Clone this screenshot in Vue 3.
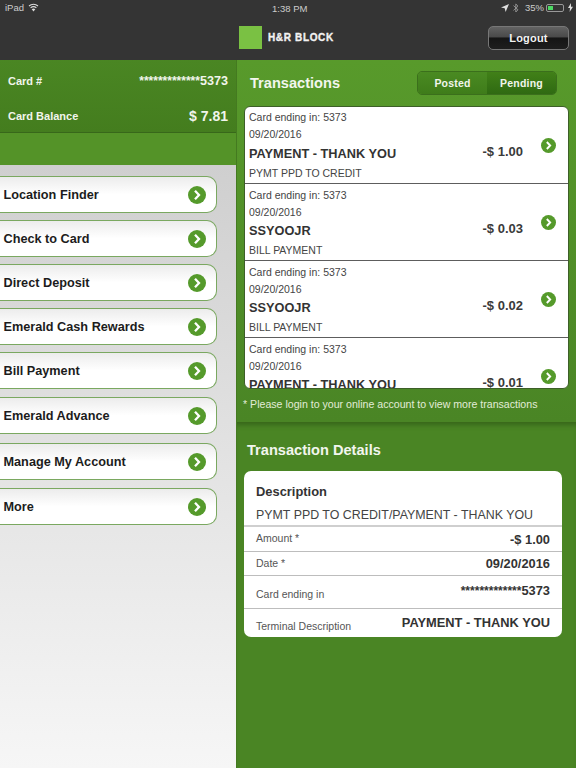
<script setup>
const menu = ['Location Finder','Check to Card','Direct Deposit','Emerald Cash Rewards','Bill Payment','Emerald Advance','Manage My Account','More']
const txs = [
  { title:'PAYMENT - THANK YOU', sub:'PYMT PPD TO CREDIT', amt:'-$ 1.00' },
  { title:'SSYOOJR', sub:'BILL PAYMENT', amt:'-$ 0.03' },
  { title:'SSYOOJR', sub:'BILL PAYMENT', amt:'-$ 0.02' },
  { title:'PAYMENT - THANK YOU', sub:'', amt:'-$ 0.01' },
]
</script>

<template>
  <div class="page">
    <header class="top">
      <div class="status">
        <div class="st-left">
          <span>iPad</span>
          <svg width="11" height="9" viewBox="0 0 11 9"><path d="M5.500 8.500 3.700 6.200a2.800 2.800 0 0 1 3.600 0Z" fill="#ddd"/><path d="M2.600 4.900a4.400 4.400 0 0 1 5.800 0M1 3a6.800 6.800 0 0 1 9 0" fill="none" stroke="#ddd" stroke-width="1.100"/></svg>
        </div>
        <span class="st-time">1:38 PM</span>
        <div class="st-right">
          <svg width="8" height="8" viewBox="0 0 8 8"><path d="M8 0 4.600 8 3.700 4.300 0 3.400Z" fill="#ddd"/></svg>
          <svg class="bt" width="6" height="10" viewBox="0 0 6 10"><path d="M.5 2.600 5 6.800 2.800 9V1L5 3.200.5 7.400" fill="none" stroke="#999" stroke-width=".9"/></svg>
          <span class="pct">35%</span>
          <div class="batt"><i></i></div>
          <svg width="5" height="9" viewBox="0 0 5 9"><path d="M3 0 0 5h2L1.600 9 5 3.700H3Z" fill="#ddd"/></svg>
        </div>
      </div>
      <div class="nav">
        <div class="logo"><i></i><span>H&amp;R BLOCK</span></div>
        <button class="logout">Logout</button>
      </div>
    </header>

    <main class="body">
      <aside class="left">
        <section class="card">
          <div class="card-row"><span>Card #</span><b class="num"><small>*************</small>5373</b></div>
          <div class="card-row"><span>Card Balance</span><b class="bal">$ 7.81</b></div>
        </section>
        <div class="spacer"></div>
        <nav class="menu">
          <a v-for="m in menu" :key="m" class="item">
            <span>{{ m }}</span>
            <svg class="chev big" viewBox="0 0 18 18"><circle cx="9" cy="9" r="9" fill="#559a2b"/><path d="M7 4.800 11 9l-4 4.200" fill="none" stroke="#fff" stroke-width="2.300"/></svg>
          </a>
        </nav>
      </aside>

      <div class="right">
        <section class="tx">
          <div class="tx-head">
            <h2>Transactions</h2>
            <div class="seg"><span class="on">Posted</span><span>Pending</span></div>
          </div>
          <div class="list">
            <div v-for="(t,i) in txs" :key="i" class="row">
              <div class="row-main">
                <p>Card ending in: 5373</p>
                <p>09/20/2016</p>
                <h3>{{ t.title }}</h3>
                <p class="sub">{{ t.sub }}</p>
              </div>
              <strong class="amt">{{ t.amt }}</strong>
              <svg class="chev" viewBox="0 0 18 18"><circle cx="9" cy="9" r="9" fill="#559a2b"/><path d="M7 4.800 11 9l-4 4.200" fill="none" stroke="#fff" stroke-width="2.300"/></svg>
            </div>
          </div>
          <p class="note">* Please login to your online account to view more transactions</p>
        </section>

        <section class="details">
          <h2>Transaction Details</h2>
          <div class="dcard">
            <div class="desc">
              <h4>Description</h4>
              <p>PYMT PPD TO CREDIT/PAYMENT - THANK YOU</p>
            </div>
            <div class="drow r1"><span>Amount *</span><b>-$ 1.00</b></div>
            <div class="drow r2"><span>Date *</span><b>09/20/2016</b></div>
            <div class="drow r3"><span>Card ending in</span><b class="mask"><small>*************</small>5373</b></div>
            <div class="drow r4"><span>Terminal Description</span><b>PAYMENT - THANK YOU</b></div>
          </div>
        </section>
      </div>
    </main>
  </div>
</template>

<style scoped>
.page { width:576px; height:768px; overflow:hidden; font-family:"Liberation Sans",Arial,sans-serif; display:flex; flex-direction:column; }
.top { height:60px; background:#343434; color:#ddd; flex:none; }
.status { height:20px; display:flex; align-items:center; justify-content:space-between; padding:0 3px 5px 5px; box-sizing:border-box; font-size:9.500px; position:relative; color:#ccc; }
.st-left,.st-right { display:flex; align-items:center; gap:4px; }
.bt { margin-right:2px; }
.pct { margin-right:-2px; }
.st-time { position:absolute; left:272px; top:3px; }
.batt { width:18px; height:8px; border:1px solid #999; border-radius:2px; box-sizing:border-box; padding:1px; }
.batt i { display:block; height:100%; width:5px; background:#4cd964; }
.nav { height:40px; position:relative; display:flex; justify-content:flex-end; align-items:flex-start; padding:6px 7px 0 0; }
.logo { position:absolute; left:239px; top:6px; display:flex; align-items:center; gap:6px; }
.logo i { width:23px; height:23px; background:#7ac143; display:block; }
.logo span { font-size:10px; font-weight:700; color:#f2f2f2; letter-spacing:.65px; -webkit-text-stroke:.35px #f2f2f2; }
.logout { width:81px; height:24px; border-radius:5px; border:1px solid #777; background:linear-gradient(#626262 0,#4a4a4a 45%,#151515 50%,#1e1e1e 100%); color:#f2f2f2; font:700 11px "Liberation Sans",Arial,sans-serif; letter-spacing:.2px; padding:0; }
.body { flex:1; display:flex; min-height:0; }
.left { width:236px; flex:none; display:flex; flex-direction:column; background:#549328; }
.card { height:73px; background:linear-gradient(#4a8623,#447d1e); border-bottom:1px solid #38681a; box-sizing:border-box; padding:3px 8px 0 8px; color:#f1f5ec; }
.card-row { height:35px; display:flex; justify-content:space-between; align-items:center; font-size:11px; font-weight:700; }
.card-row .num { font-size:12.600px; }
.card-row .num small { font-size:12px; }
.card-row .bal { font-size:14px; }
.spacer { height:32px; flex:none; }
.menu { flex:1; background:linear-gradient(#cfcfcf,#e3e3e3 50%,#f6f6f6); display:flex; flex-direction:column; padding-top:11px; gap:7px; align-items:flex-start; }
.item { width:218px; height:37px; margin-left:-1px; box-sizing:border-box; padding:0 10px 0 4.500px; display:flex; align-items:center; justify-content:space-between; border:1px solid #7aa860; border-left:none; border-radius:0 10px 10px 0; background:linear-gradient(#ececec,#fff 50%); font-size:12.700px; font-weight:700; color:#1c1c1c; }
.item:nth-child(6) { margin-top:1px; }
.item:nth-child(7) { margin-top:2px; }
.item:nth-child(8) { margin-top:1px; }
.chev { width:15px; height:15px; flex:none; }
.chev.big { width:18px; height:18px; }
.right { flex:1; display:flex; flex-direction:column; border-left:1px solid #447a20; }
.tx { height:362px; flex:none; box-sizing:border-box; background:linear-gradient(#589a2b,#4a8525); padding:0 7px 0 7px; }
.tx-head { height:46px; display:flex; align-items:center; justify-content:space-between; padding:0 12px 0 6px; }
h2 { margin:0; color:#f2f6ee; font-size:14.600px; font-weight:700; }
.seg { width:140px; height:24px; display:flex; border-radius:5px; border:1px solid #3b6f1c; box-sizing:border-box; overflow:hidden; font-size:10.500px; font-weight:700; color:#f1f5ec; letter-spacing:.2px; }
.seg span { flex:1; display:flex; align-items:center; justify-content:center; background:linear-gradient(#418018,#2f6a12); }
.seg .on { background:linear-gradient(#4a8a22,#3f7c1a); }
.list { height:283px; background:#fff; border:1px solid #3d5f28; border-radius:6px; box-sizing:border-box; overflow:hidden; }
.row { height:77px; flex:none; display:flex; border-bottom:1px solid #5d5d5d; box-sizing:border-box; padding:3px 12px 0 4px; position:relative; color:#3a3a3a; }
.row:first-child { padding-top:2px; }
.row:last-child { border-bottom:none; }
.row-main { flex:1; }
.row p { margin:0; font-size:10.500px; line-height:17px; color:#444; white-space:nowrap; }
.row h3 { margin:0; font-size:12.750px; line-height:20px; font-weight:700; color:#333; white-space:nowrap; }
.row .sub { margin-top:0; line-height:18px; }
.row:first-child h3 { line-height:22px; }
.row:first-child .sub { line-height:16px; }
.amt { position:absolute; right:45px; top:37px; font-size:13px; line-height:16px; color:#3a3a3a; }
.row .chev { position:absolute; right:12px; top:31px; }
.note { margin:9px 0 0 -1px; font-size:10.600px; line-height:12px; color:#e2ecd8; }
.details { flex:1; background:#4a8524; box-shadow:inset 0 6px 5px -3px #37661a; padding:19px 14px 0 7px; box-sizing:border-box; }
.details h2 { line-height:18px; margin-left:3px; }
.dcard { margin-top:12px; background:#fff; border-radius:7px; height:166px; overflow:hidden; color:#444; }
.desc { height:56px; box-sizing:border-box; padding:13px 12px 0 12px; border-bottom:2px solid #cfcfcf; }
.desc h4 { margin:0; font-size:12.900px; line-height:16px; font-weight:700; color:#333; }
.desc p { margin:7px 0 0; font-size:12.400px; line-height:16px; color:#444; white-space:nowrap; }
.drow { display:flex; justify-content:space-between; box-sizing:border-box; padding:0 12px 0 12px; font-size:10.500px; color:#555; border-bottom:1px solid #bdbdbd; align-items:center; }
.drow b { font-size:12.850px; color:#333; }
.r1 { height:25px; }
.r2 { height:24px; }
.r1 span,.r2 span { margin-top:-2px; }
.r3 { height:33px; }
.r3 span { margin-top:4px; }
.r3 b { margin-top:-3px; }
.r4 { height:29px; border-bottom:none; }
.r4 span { margin-top:4px; }
.r4 b { margin-top:-2px; }
.mask { font-size:12.600px; }
.mask small { font-size:12px; }
</style>
